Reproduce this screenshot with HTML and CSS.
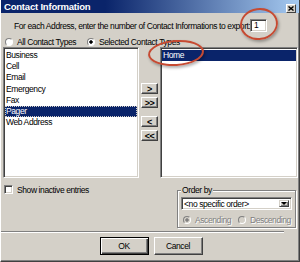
FILE: index.html
```html
<!DOCTYPE html>
<html lang="en">
<head>
    <meta charset="UTF-8">
    <title>Contact Information</title>
    <link rel="stylesheet" href="styles.css">
</head>
<body>
    <div class="dialog">
        <div class="titlebar">
            <span class="title">Contact Information</span>
            <span class="close-btn">
                <svg width="6" height="5" viewBox="0 0 6 5">
                    <path d="M0.5 0.5 L5.5 4.5 M5.5 0.5 L0.5 4.5" stroke="#000" stroke-width="1.4" fill="none"/>
                </svg>
            </span>
        </div>

        <div class="intro">
            <span class="intro-text">For each Address, enter the number of Contact Informations to export:</span>
            <span class="field count">1</span>
        </div>

        <div class="scope">
            <span class="option wide"><span class="radio"></span>All Contact Types</span>
            <span class="option"><span class="radio checked"></span>Selected Contact Types</span>
        </div>

        <div class="lists">
            <div class="listbox left">
                <div class="item">Business</div>
                <div class="item">Cell</div>
                <div class="item">Email</div>
                <div class="item">Emergency</div>
                <div class="item">Fax</div>
                <div class="item selected focused">Pager</div>
                <div class="item">Web Address</div>
            </div>
            <div class="movers">
                <div class="btn mover">&gt;</div>
                <div class="btn mover">&gt;&gt;</div>
                <div class="btn mover spaced">&lt;</div>
                <div class="btn mover">&lt;&lt;</div>
            </div>
            <div class="listbox right">
                <div class="item selected">Home</div>
            </div>
        </div>

        <div class="options">
            <div class="check-row"><span class="checkbox"></span>Show inactive entries</div>
            <div class="group">
                <div class="group-label">Order by</div>
                <div class="field select">
                    <span class="select-text">&lt;no specific order&gt;</span>
                    <span class="select-arrow"></span>
                </div>
                <div class="order-row disabled">
                    <span class="option short"><span class="radio checked"></span>Ascending</span>
                    <span class="option"><span class="radio"></span>Descending</span>
                </div>
            </div>
        </div>

        <div class="separator"></div>

        <div class="actions">
            <div class="btn push default">OK</div>
            <div class="btn push">Cancel</div>
        </div>

        <div class="mark mark-count"></div>
        <div class="mark mark-home"></div>
    </div>
</body>
</html>
```

FILE: styles.css
```css
body {
    margin: 0;
    background: #d4d0c8;
    font-family: "Liberation Sans", Arial, sans-serif;
    font-size: 8.5px;
    letter-spacing: -0.4px;
    color: #000;
}

.dialog {
    position: relative;
    width: 300px;
    height: 262px;
    box-sizing: border-box;
    background: #d4d0c8;
    border-left: 1px solid #fff;
    border-right: 1px solid #404040;
    border-bottom: 1px solid #404040;
    box-shadow: inset -1px -1px #808080;
    overflow: hidden;
}

.titlebar {
    height: 13px;
    display: flex;
    justify-content: space-between;
    padding: 0 3px;
    background: linear-gradient(to right, #0a246a 35%, #a6caf0);
    color: #fff;
}

.title {
    font-weight: bold;
    font-size: 9.5px;
    letter-spacing: -0.2px;
    line-height: 13px;
}

.close-btn {
    width: 10px;
    height: 9px;
    box-sizing: border-box;
    margin-top: 4px;
    background: #d4d0c8;
    border: 1px solid;
    border-color: #fff #404040 #404040 #fff;
    display: flex;
    align-items: center;
    justify-content: center;
}

/* sunken white boxes */
.field,
.listbox {
    box-sizing: border-box;
    background: #fff;
    border: 1px solid;
    border-color: #808080 #fff #fff #808080;
    box-shadow: inset 1px 1px #404040, inset -1px -1px #d4d0c8;
}

/* raised buttons */
.btn {
    box-sizing: border-box;
    background: #d4d0c8;
    border: 1px solid;
    border-color: #fff #404040 #404040 #fff;
    box-shadow: inset -1px -1px #808080;
    display: flex;
    align-items: center;
    justify-content: center;
}

.intro {
    display: flex;
    align-items: center;
    height: 13px;
    margin-top: 6px;
    padding-left: 13px;
}

.intro-text {
    width: 236px;
    white-space: nowrap;
}

.count {
    width: 17px;
    height: 13px;
    padding-left: 3px;
    line-height: 11px;
}

.scope {
    display: flex;
    align-items: center;
    height: 10px;
    margin-top: 5px;
    padding-left: 4px;
}

.option {
    display: flex;
    align-items: center;
    gap: 4px;
    white-space: nowrap;
}

.option.wide {
    width: 82px;
}

.option.short {
    width: 55px;
}

.radio {
    flex: none;
    width: 8px;
    height: 8px;
    box-sizing: border-box;
    border-radius: 50%;
    border: 1px solid;
    border-color: #808080 #fff #fff #808080;
    background: #fff;
}

.radio.checked {
    background: radial-gradient(circle, #000 0 1.4px, #fff 2px);
}

.lists {
    display: flex;
    height: 131px;
    padding-left: 2px;
}

.listbox {
    height: 100%;
    padding: 2px 1px 0 1px;
}

.listbox.left {
    width: 136px;
}

.listbox.right {
    width: 138px;
}

.item {
    height: 11.2px;
    line-height: 11px;
    padding-left: 1px;
    white-space: nowrap;
}

.item.selected {
    background: #0a246a;
    color: #fff;
}

.item.focused {
    outline: 1px dotted #d4d0c8;
    outline-offset: -1px;
}

.movers {
    width: 17px;
    margin: 0 2px;
    padding-top: 36px;
    display: flex;
    flex-direction: column;
    gap: 3px;
}

.mover {
    height: 11px;
    font-size: 9px;
    font-weight: bold;
    letter-spacing: -0.5px;
}

.mover.spaced {
    margin-top: 5px;
}

.options {
    display: flex;
    justify-content: space-between;
    align-items: flex-start;
    height: 53px;
}

.check-row {
    display: flex;
    align-items: center;
    gap: 4px;
    height: 9px;
    margin-top: 7px;
    padding-left: 3px;
    white-space: nowrap;
}

.checkbox {
    width: 9px;
    height: 9px;
    box-sizing: border-box;
    background: #fff;
    border: 1px solid;
    border-color: #808080 #fff #fff #808080;
    box-shadow: inset 1px 1px #404040, inset -1px -1px #d4d0c8;
}

.group {
    width: 119px;
    height: 38px;
    margin-top: 12px;
    margin-right: 3px;
    box-sizing: border-box;
    border: 1px solid #808080;
    box-shadow: inset 1px 1px #fff, 1px 1px #fff;
    padding: 0 3px;
}

.group-label {
    width: max-content;
    height: 10px;
    line-height: 10px;
    margin-top: -6px;
    padding: 0 1px;
    background: #d4d0c8;
}

.select {
    display: flex;
    height: 13px;
    margin-top: 2px;
    padding: 2px;
}

.select-text {
    flex: 1;
    line-height: 9px;
    white-space: nowrap;
}

.select-arrow {
    width: 10px;
    box-sizing: border-box;
    background: #d4d0c8;
    border: 1px solid;
    border-color: #d4d0c8 #404040 #404040 #d4d0c8;
    box-shadow: inset 1px 1px #fff, inset -1px -1px #808080;
    display: flex;
    align-items: center;
    justify-content: center;
}

.select-arrow::after {
    content: "";
    border-left: 3px solid transparent;
    border-right: 3px solid transparent;
    border-top: 3px solid #000;
}

.order-row {
    display: flex;
    align-items: center;
    height: 9px;
    margin-top: 5px;
    padding-left: 2px;
}

.disabled {
    color: #808080;
    text-shadow: 1px 1px #fff;
}

.disabled .radio {
    background: #d4d0c8;
}

.disabled .radio.checked {
    background: radial-gradient(circle, #808080 0 1.4px, #d4d0c8 2px);
}

.separator {
    border-top: 1px solid #808080;
    border-bottom: 1px solid #fff;
    margin-right: 15px;
}

.actions {
    display: flex;
    justify-content: center;
    gap: 5px;
    margin-top: 4px;
    padding-left: 2px;
}

.push {
    width: 49px;
    height: 18px;
}

.push.default {
    border-color: #000;
    box-shadow: inset 1px 1px #fff, inset -1px -1px #404040, inset -2px -2px #808080;
}

/* red annotation rings drawn over the dialog */
.mark {
    position: absolute;
    border: 2px solid #c64a32;
    border-radius: 50%;
    box-shadow: 1px 2px 3px rgba(0, 0, 0, 0.3);
}

.mark-count {
    left: 239px;
    top: 8px;
    width: 34px;
    height: 28px;
    transform: rotate(-8deg);
}

.mark-home {
    left: 147px;
    top: 40px;
    width: 52px;
    height: 22px;
    transform: rotate(-4deg);
}
```
